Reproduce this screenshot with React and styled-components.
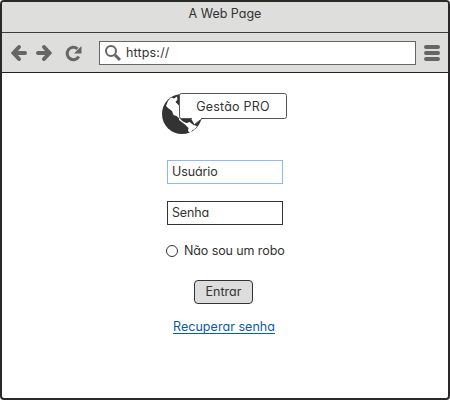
import React from "react";
import styled, { createGlobalStyle } from "styled-components";

const GlobalStyle = createGlobalStyle`
  * { box-sizing: border-box; }
  body { margin: 0; background: #fff; }
`;

const BrowserWindow = styled.div`
  width: 450px;
  height: 400px;
  display: flex;
  flex-direction: column;
  overflow: hidden;
  border: 2px solid #2b2829;
  border-radius: 4px;
  background: #fff;
  color: #333;
  font-family: Inter, "Open Sans", sans-serif;
  font-feature-settings: "cv11";
  font-size: 12.5px;
  line-height: 16px;
`;

const Label = styled.span`
  letter-spacing: ${(p) => p.$spacing || 0}px;
  white-space: nowrap;
`;

const TitleBar = styled.header`
  height: 31px;
  flex: none;
  display: flex;
  justify-content: center;
  padding-top: 4px;
  background: #dededd;
  border-bottom: 1px solid #3c3c3c;
`;

const Toolbar = styled.nav`
  height: 40px;
  flex: none;
  display: flex;
  align-items: center;
  padding: 0 8px;
  background: #dededd;
  border-bottom: 1px solid #222;
`;

const NavIcon = styled.svg`
  width: ${(p) => p.$w}px;
  height: 18px;
  flex: none;
  margin-right: ${(p) => p.$gap || 0}px;
  fill: none;
  stroke: #666;
`;

const AddressBar = styled.div`
  width: 317px;
  height: 24px;
  flex: none;
  margin-right: 8px;
  display: flex;
  align-items: center;
  padding: 1px 0 0 4px;
  background: #fff;
  border: 1px solid #666;
`;

const Page = styled.main`
  flex: 1;
  display: flex;
  flex-direction: column;
  align-items: center;
`;

const Brand = styled.div`
  position: relative;
  width: 126px;
  height: 44px;
  margin: 19px 2px 0 0;
`;

const Logo = styled.svg`
  display: block;
  width: 126px;
  height: 44px;
`;

const BrandName = styled.div`
  position: absolute;
  left: 18px;
  top: 1px;
  width: 108px;
  height: 27px;
  display: grid;
  place-items: center;
`;

const Form = styled.form`
  width: 118px;
  display: flex;
  flex-direction: column;
  align-items: center;
  margin-top: 24px;
`;

const Field = styled.div`
  width: 116px;
  height: 24px;
  margin-bottom: 17px;
  padding: 3px 4px;
  border: 1px solid ${(p) => (p.$active ? "#91b7f2" : "#333")};
`;

const Option = styled.label`
  align-self: flex-start;
  height: 18px;
  display: flex;
  align-items: center;
`;

const Radio = styled.span`
  width: 12px;
  height: 12px;
  margin-right: 6px;
  border: 1px solid #333;
  border-radius: 50%;
`;

const Button = styled.button`
  width: 59px;
  height: 24px;
  margin: 20px 3px 0 0;
  padding: 0;
  border: 1px solid #333;
  border-radius: 4px;
  background: #ddd;
  color: #333;
  font: inherit;
  font-feature-settings: inherit;
`;

const RecoverLink = styled.a`
  margin: 15px 2px 0 0;
  height: 15px;
  line-height: 16px;
  color: #0b5ba5;
  border-bottom: 1px solid #0b5ba5;
`;

export default function App() {
  return (
    <>
      <GlobalStyle />
      <BrowserWindow>
        <TitleBar><Label>A Web Page</Label></TitleBar>
        <Toolbar>
          <NavIcon $w={18} $gap={7} viewBox="0 0 18 18" strokeWidth="4" strokeLinecap="round">
            <path d="M9 3L3.5 9 9 15M4 9h11" />
          </NavIcon>
          <NavIcon $w={18} $gap={11} viewBox="0 0 18 18" strokeWidth="4" strokeLinecap="round">
            <path d="M9 3l5.5 6L9 15M3 9h11" />
          </NavIcon>
          <NavIcon $w={18} $gap={17} viewBox="0 0 18 18" strokeWidth="3">
            <path d="M13.5 4.8A6.2 6.2 0 1 0 14.8 12.500" />
            <path d="M17.5 2v7.5H10z" fill="#666" stroke="none" />
          </NavIcon>
          <AddressBar>
            <NavIcon $w={18} $gap={4} viewBox="0 0 18 18">
              <circle cx="7" cy="7" r="5" strokeWidth="2" />
              <path d="M11 11l5 5" strokeWidth="3" />
            </NavIcon>
            <Label $spacing={0.17}>https://</Label>
          </AddressBar>
          <NavIcon $w={16} viewBox="0 0 16 18" strokeWidth="4" strokeLinecap="round">
            <path d="M2 3h12M2 9h12M2 15h12" />
          </NavIcon>
        </Toolbar>
        <Page>
          <Brand>
            <Logo viewBox="0 0 126 44">
              <circle cx="21" cy="22" r="20" fill="#333" />
              <path d="M5 14L7 9l3-3.5 3 1 3-2 .5 3L14.500 10l3 3 2 1V27.500l-4-3.500-3-1-1.500-4L7 16z" fill="#fff" />
              <path d="M18 26l4 3.500 3.500 1.500 3-1 4 3 3.500 1-2 3-3 1.500-1.500 2.500-2.500-2 .5-3-3.500-3.500-6-4.500z" fill="#fff" />
              <path d="M22 27h8l2.500 4-4-1.500-3 1.200-3.500-1.700z" fill="#333" />
              <path d="M30 26.500l3.5 6L41 26.500z" fill="#fff" />
              <path d="M33.500 32.500l7.500-6" fill="none" stroke="#555" />
              <rect x="18.500" y="1.500" width="107" height="25" rx="2" fill="#fff" stroke="#555" />
              <path d="M31 26.500h9" fill="none" stroke="#fff" strokeWidth="1.500" />
            </Logo>
            <BrandName><Label $spacing={0.22}>Gestão PRO</Label></BrandName>
          </Brand>
          <Form>
            <Field $active><Label $spacing={-0.1}>Usuário</Label></Field>
            <Field><Label $spacing={-0.15}>Senha</Label></Field>
            <Option><Radio /><Label $spacing={-0.1}>Não sou um robo</Label></Option>
            <Button type="button"><Label $spacing={0.05}>Entrar</Label></Button>
            <RecoverLink><Label $spacing={0.04}>Recuperar senha</Label></RecoverLink>
          </Form>
        </Page>
      </BrowserWindow>
    </>
  );
}
